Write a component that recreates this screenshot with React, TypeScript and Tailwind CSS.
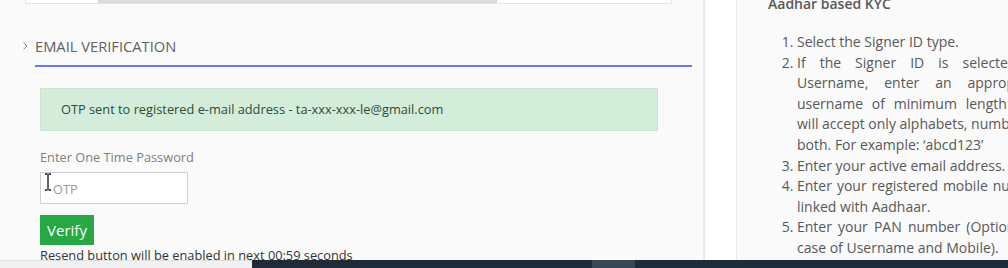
import React from 'react';

// item 2 keeps the reference's own line breaks; each line is stretched to the column edge
const signerLines: string[] = [
  'If the Signer ID is selected as',
  'Username, enter an appropriate',
  'username of minimum length 5. It',
  'will accept only alphabets, numbers or',
];

const IBeam: React.FC = () => (
  <svg className="absolute left-[4px] top-[1px]" width="8" height="18" viewBox="0 0 8 18" aria-hidden>
    <path d="M1 1h2.5M4.5 1H7M4 1.5v15M1 17h2.5M4.5 17H7" stroke="#111" strokeWidth="1.3" fill="none" />
  </svg>
);

const App: React.FC = () => {
  return (
    <div className="w-[1008px] h-[268px] overflow-hidden bg-[#fafafa] flex flex-col font-['Open_Sans',sans-serif]">
      <div className="flex h-[260px] shrink-0 overflow-hidden">
        {/* left: email verification form */}
        <div className="w-[704px] shrink-0 border-r border-[#ececec]">
          <div className="ml-[25px] w-[647px] h-[4px] flex border-x border-b border-[#e3e3e3]">
            <div className="w-[72px] bg-white" />
            <div className="w-[399px] bg-[#dadada]" />
            <div className="flex-1 bg-white" />
          </div>

          <div className="mt-[32px] flex items-center h-[20px] pl-[22px]">
            <svg width="7" height="10" viewBox="0 0 7 10" className="mr-[6px]" aria-hidden>
              <path d="M1.5 1.5L5 5L1.5 8.5" stroke="#8a8a8a" strokeWidth="1" fill="none" />
            </svg>
            <span className="text-[14.7px] leading-[20px] text-[#616161] uppercase">Email Verification</span>
          </div>
          <div className="mt-[9px] ml-[35px] w-[657px] h-[2px] bg-[#6b79ee]" />

          <div className="mt-[21px] ml-[40px] w-[618px] h-[43px] bg-[#d4edda] border border-[#c8e6cf] flex items-center pl-[20px]">
            <span className="text-[12.8px] text-[#2f4b37]">OTP sent to registered e-mail address - ta-xxx-xxx-le@gmail.com</span>
          </div>

          <div className="mt-[17px] ml-[40px] text-[12.8px] leading-[18px] text-[#808080]">Enter One Time Password</div>
          <div className="mt-[6px] ml-[40px] relative w-[148px] h-[32px]">
            <input
              type="text"
              placeholder="OTP"
              className="w-full h-full bg-white border border-[#cfcfcf] pl-[12px] pt-[2px] text-[12.8px] placeholder:text-[#9a9a9a] outline-none"
            />
            <IBeam />
          </div>
          <button
            type="button"
            className="block mt-[11px] ml-[40px] w-[54px] h-[30px] bg-[#28a745] text-white text-[15px] leading-[30px] text-center"
          >
            Verify
          </button>
          <div className="mt-[1px] ml-[40px] text-[12.8px] leading-[18px] text-[#333]">
            Resend button will be enabled in next 00:59 seconds
          </div>
        </div>

        <div className="w-[33px] shrink-0 bg-white border-l border-r border-[#e8e8e8]" />

        {/* right: instructions */}
        <div className="flex-1 pl-[31px] text-[#585858]">
          <div className="-mt-[6px] text-[14px] leading-[20px] font-semibold">Aadhar based KYC</div>
          <ol className="mt-[18px] w-[277px] pl-[29px] list-decimal text-[14px] leading-[20.6px] text-justify">
            <li>Select the Signer ID type.</li>
            <li>
              {signerLines.map((l) => (
                <span key={l} className="block whitespace-nowrap [text-align-last:justify]">
                  {l}
                </span>
              ))}
              <span className="block">both. For example: {'\u2018abcd123\u2019'}</span>
            </li>
            <li>Enter your active email address.</li>
            <li>Enter your registered mobile number linked with Aadhaar.</li>
            <li>Enter your PAN number (Optional in case of Username and Mobile).</li>
          </ol>
        </div>
      </div>

      <div className="h-[8px] flex">
        <div className="w-[252px] bg-[#f1f1f1] border-t border-[#dedede]" />
        <div className="w-[340px] bg-[#1f2c37]" />
        <div className="w-[43px] bg-[#3a4651]" />
        <div className="flex-1 bg-[#1f2c37]" />
      </div>
    </div>
  );
};

export default App;
